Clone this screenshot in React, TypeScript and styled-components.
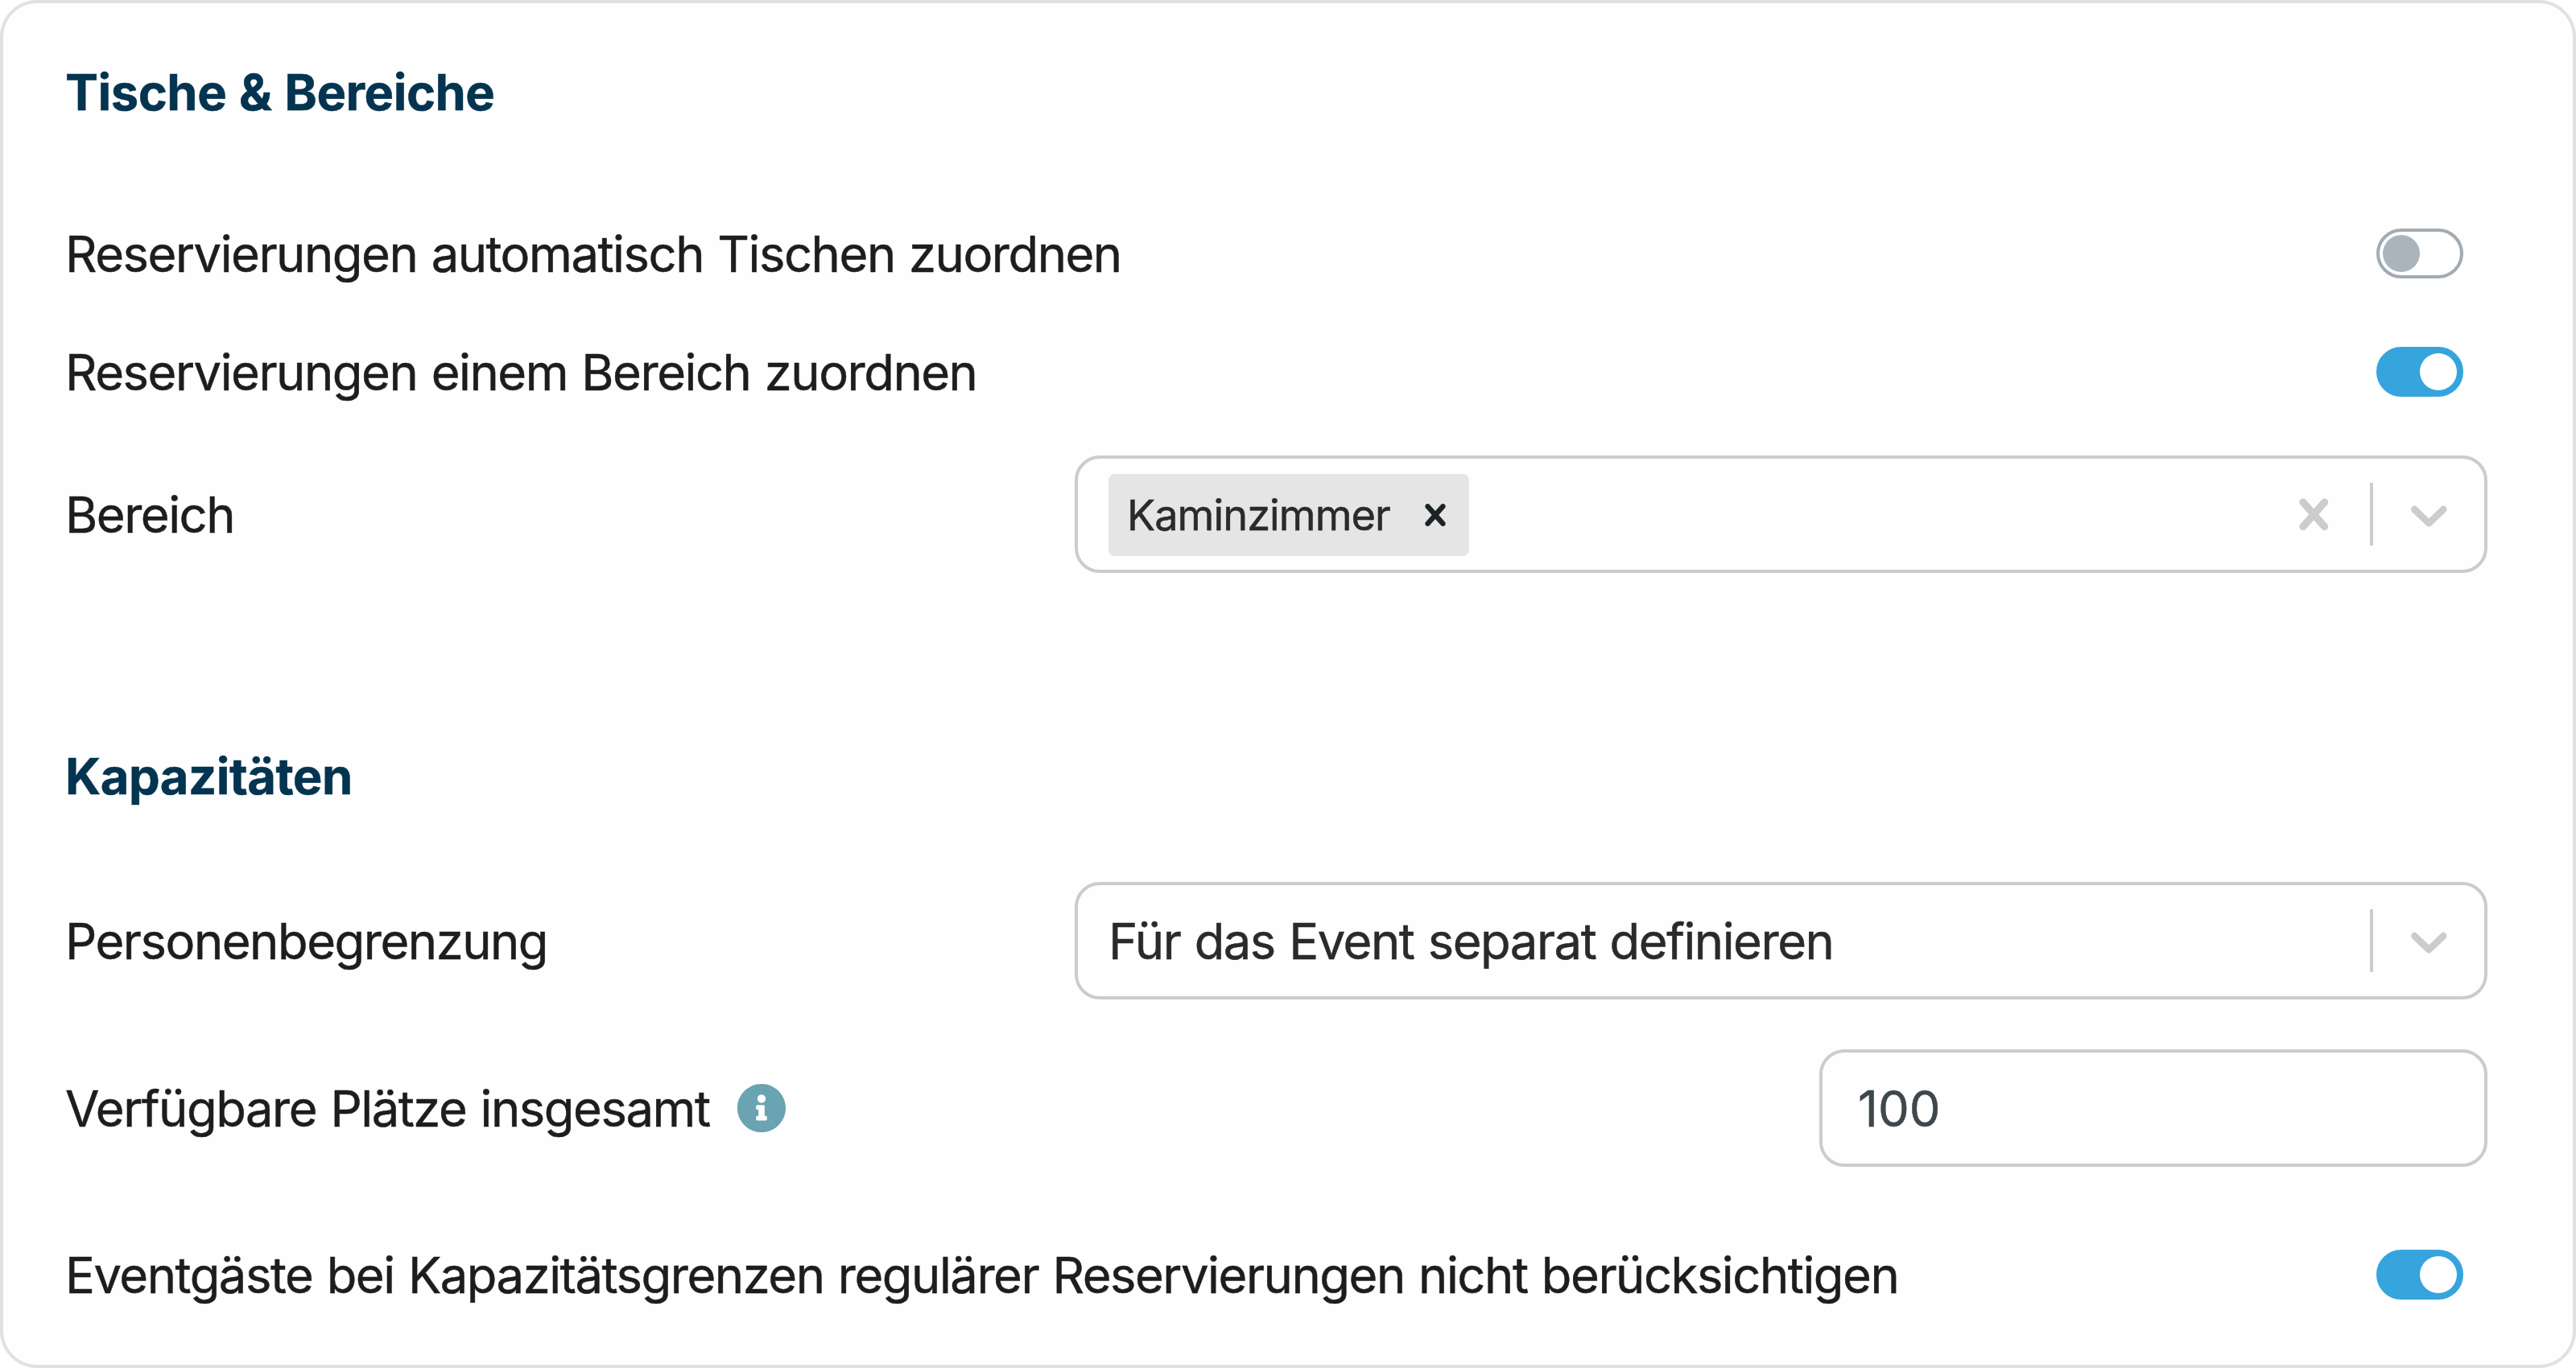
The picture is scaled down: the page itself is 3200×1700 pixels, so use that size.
import React, { FunctionComponent, ReactNode } from 'react';
import styled, { createGlobalStyle } from 'styled-components';
import { FaInfoCircle } from 'react-icons/fa';

const GlobalStyle = createGlobalStyle`
    *,
    *::before,
    *::after {
        box-sizing: border-box;
    }

    body {
        margin: 0;
        background-color: #fff;
        color: #1b1d1f;
        font-family: Inter, 'Liberation Sans', sans-serif;
        font-size: 61.5px;
        letter-spacing: -1.48px;
        word-spacing: 1.5px;
        -webkit-text-stroke: 0.5px currentColor;
    }
`;

const Card = styled.main`
    width: 3200px;
    height: 1700px;
    padding: 65px 106px 0 77px;
    border: 4px solid #dfe2e4;
    border-radius: 46px;
    background-color: #fefefe;
`;

const Section = styled.section`
    display: flex;
    flex-direction: column;

    & + & {
        margin-top: 207px;
    }
`;

const Heading = styled.h2<{ $gap: number }>`
    height: 92px;
    margin: 0 0 ${props => props.$gap}px;
    color: #04344f;
    font-size: 61.5px;
    font-weight: 700;
    line-height: 92px;
    letter-spacing: -0.5px;
`;

const StyledRow = styled.div<{ $gap: number }>`
    display: flex;
    align-items: center;
    justify-content: space-between;
    min-height: 92px;
    margin-bottom: ${props => props.$gap}px;
`;

const Label = styled.label`
    display: flex;
    align-items: center;
    gap: 33px;
    padding-top: 2px;
    line-height: 90px;
    white-space: nowrap;
`;

const InfoIcon = styled(FaInfoCircle)`
    width: 62px;
    height: 62px;
    margin-bottom: 3px;
    color: #6aa3b2;
`;

const SwitchTrack = styled.button<{ $on: boolean }>`
    display: flex;
    align-items: center;
    justify-content: ${props => (props.$on ? 'flex-end' : 'flex-start')};
    width: 108px;
    height: 62px;
    margin: 0 30.5px 0 0;
    padding: 0 4px;
    border: 4px solid ${props => (props.$on ? '#36a4dd' : '#a3abb2')};
    border-radius: 31px;
    background-color: ${props => (props.$on ? '#36a4dd' : '#fff')};
`;

const SwitchKnob = styled.span<{ $on: boolean }>`
    width: 46px;
    height: 46px;
    border-radius: 50%;
    background-color: ${props => (props.$on ? '#fff' : '#a9b4bc')};
`;

const Control = styled.div`
    display: flex;
    align-items: center;
    width: 1755px;
    height: 146px;
    border: 4px solid #c8cdcf;
    border-radius: 31px;
    background-color: #fefefe;
`;

const ValueContainer = styled.div`
    display: flex;
    flex: 1;
    align-items: center;
    padding-left: 38px;
`;

const SingleValue = styled.span`
    color: #2a2a2a;
    white-space: nowrap;
`;

const MultiValue = styled.div`
    display: flex;
    align-items: center;
    justify-content: space-between;
    width: 448px;
    height: 102px;
    margin-top: 2px;
    padding: 0 15px 1px 23px;
    border-radius: 8px;
    background-color: #e5e5e5;
    color: #2a2a2a;
    font-size: 52.3px;
    letter-spacing: -0.95px;
`;

const Indicator = styled.div`
    display: flex;
    padding: 0 30.8px;
    color: #ccc;
`;

const Separator = styled.span`
    width: 4px;
    height: 78px;
    background-color: #ccc;
`;

const RemoveButton = styled.span`
    display: flex;
    color: #1b2326;
`;

const NumberInput = styled.input`
    width: 830px;
    height: 146px;
    padding: 0 44px;
    border: 4px solid #c8cdcf;
    border-radius: 31px;
    background-color: #fefefe;
    color: #3d474c;
    font: inherit;
`;

interface IconProps {
    size: number;
}

const CrossIcon: FunctionComponent<IconProps> = ({ size }) => (
    <svg width={size} height={size} viewBox="0 0 20 20" fill="currentColor">
        <path d="M14.348 14.849c-0.469 0.469-1.229 0.469-1.697 0l-2.651-3.030-2.651 3.029c-0.469 0.469-1.229 0.469-1.697 0-0.469-0.469-0.469-1.229 0-1.697l2.758-3.15-2.759-3.152c-0.469-0.469-0.469-1.228 0-1.697s1.228-0.469 1.697 0l2.652 3.031 2.651-3.031c0.469-0.469 1.228-0.469 1.697 0s0.469 1.229 0 1.697l-2.758 3.152 2.758 3.15c0.469 0.469 0.469 1.229 0 1.698z" />
    </svg>
);

const ChevronIcon: FunctionComponent<IconProps> = ({ size }) => (
    <svg width={size} height={size} viewBox="0 0 20 20" fill="currentColor">
        <path d="M4.516 7.548c0.436-0.446 1.043-0.481 1.576 0l3.908 3.747 3.908-3.747c0.533-0.481 1.141-0.446 1.574 0 0.436 0.445 0.408 1.197 0 1.615-0.406 0.418-4.695 4.502-4.695 4.502-0.217 0.223-0.502 0.335-0.787 0.335s-0.57-0.112-0.789-0.335c0 0-4.287-4.084-4.695-4.502s-0.436-1.17 0-1.615z" />
    </svg>
);

interface SwitchProps {
    defaultOn?: boolean;
}

const Switch: FunctionComponent<SwitchProps> = ({ defaultOn = false }) => {
    const [on, setOn] = React.useState(defaultOn);

    return (
        <SwitchTrack
            type="button"
            role="switch"
            aria-checked={on}
            $on={on}
            onClick={() => setOn(!on)}
        >
            <SwitchKnob $on={on} />
        </SwitchTrack>
    );
};

interface SelectProps {
    children: ReactNode;
    clearable?: boolean;
}

const Select: FunctionComponent<SelectProps> = ({ children, clearable }) => (
    <Control>
        <ValueContainer>{children}</ValueContainer>
        {clearable && (
            <Indicator>
                <CrossIcon size={76.6} />
            </Indicator>
        )}
        <Separator />
        <Indicator>
            <ChevronIcon size={76.6} />
        </Indicator>
    </Control>
);

interface RowProps {
    label: string;
    gap?: number;
    info?: boolean;
    children: ReactNode;
}

const Row: FunctionComponent<RowProps> = ({
    label,
    gap = 0,
    info,
    children,
}) => (
    <StyledRow $gap={gap}>
        <Label>
            {label}
            {info && <InfoIcon />}
        </Label>
        {children}
    </StyledRow>
);

const App: FunctionComponent = () => (
    <>
        <GlobalStyle />
        <Card>
            <Section>
                <Heading $gap={108}>Tische &amp; Bereiche</Heading>
                <Row label="Reservierungen automatisch Tischen zuordnen" gap={55}>
                    <Switch />
                </Row>
                <Row label="Reservierungen einem Bereich zuordnen" gap={58}>
                    <Switch defaultOn />
                </Row>
                <Row label="Bereich">
                    <Select clearable>
                        <MultiValue>
                            Kaminzimmer
                            <RemoveButton>
                                <CrossIcon size={54} />
                            </RemoveButton>
                        </MultiValue>
                    </Select>
                </Row>
            </Section>
            <Section>
                <Heading $gap={85}>Kapazitäten</Heading>
                <Row label="Personenbegrenzung" gap={62}>
                    <Select>
                        <SingleValue>Für das Event separat definieren</SingleValue>
                    </Select>
                </Row>
                <Row label="Verfügbare Plätze insgesamt" gap={88} info>
                    <NumberInput type="text" defaultValue="100" />
                </Row>
                <Row label="Eventgäste bei Kapazitätsgrenzen regulärer Reservierungen nicht berücksichtigen">
                    <Switch defaultOn />
                </Row>
            </Section>
        </Card>
    </>
);

export default App;
